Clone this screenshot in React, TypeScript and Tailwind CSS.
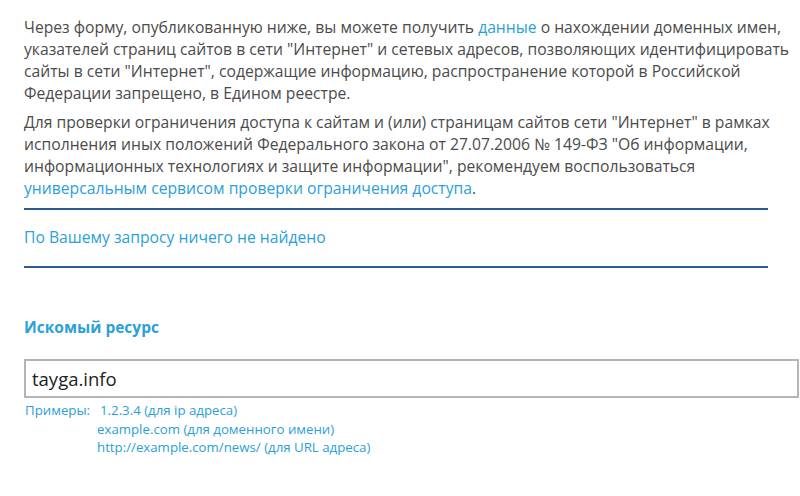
export default function App() {
  return (
    <div className="min-h-screen bg-white pt-[16px] pl-6 text-[#4b4b4b]" style={{ fontFamily: '"Open Sans", sans-serif' }}>
      <div className="w-[772px] text-[15.7px] leading-[22px]">
        <p>
          Через форму, опубликованную ниже, вы можете получить{" "}
          <a className="text-[#2ba0d9]">данные</a> о нахождении доменных имен, указателей страниц сайтов в сети "Интернет" и сетевых адресов, позволяющих идентифицировать сайты в сети "Интернет", содержащие информацию, распространение которой в Российской Федерации запрещено, в Едином реестре.
        </p>
        <p className="mt-[7px]">
          Для проверки ограничения доступа к сайтам и (или) страницам сайтов сети "Интернет" в рамках исполнения иных положений Федерального закона от 27.07.2006 № 149-ФЗ "Об информации, информационных технологиях и защите информации", рекомендуем воспользоваться{" "}
          <a className="text-[#2ba0d9]">универсальным сервисом проверки ограничения доступа</a>.
        </p>
      </div>
      <div className="mt-[9px] w-[744px] border-t-2 border-[#2c5c93]" />
      <div className="w-[744px] pt-[16px] pb-[18px] text-[15.7px] leading-[22px] text-[#2ba0d9]">По Вашему запросу ничего не найдено</div>
      <div className="w-[744px] border-t-2 border-[#2c5c93]" />
      <div className="mt-[48px] text-[15.5px] font-bold leading-[22px] text-[#2ba0d9]">Искомый ресурс</div>
      <div className="mt-[21px] flex h-[39px] w-[775px] items-center border-2 border-[#b5b5b5] px-[6px] text-[18.5px] text-[#222]">
        tayga.info
      </div>
      <div className="mt-[3px] flex text-[13.25px] leading-[18.5px] text-[#2ba0d9]">
        <div className="w-[73px] pl-px">Примеры:</div>
        <div>
          <div className="pl-[3px]">1.2.3.4 (для ip адреса)</div>
          <div>example.com (для доменного имени)</div>
          <div>http://example.com/news/ (для URL адреса)</div>
        </div>
      </div>
    </div>
  );
}
